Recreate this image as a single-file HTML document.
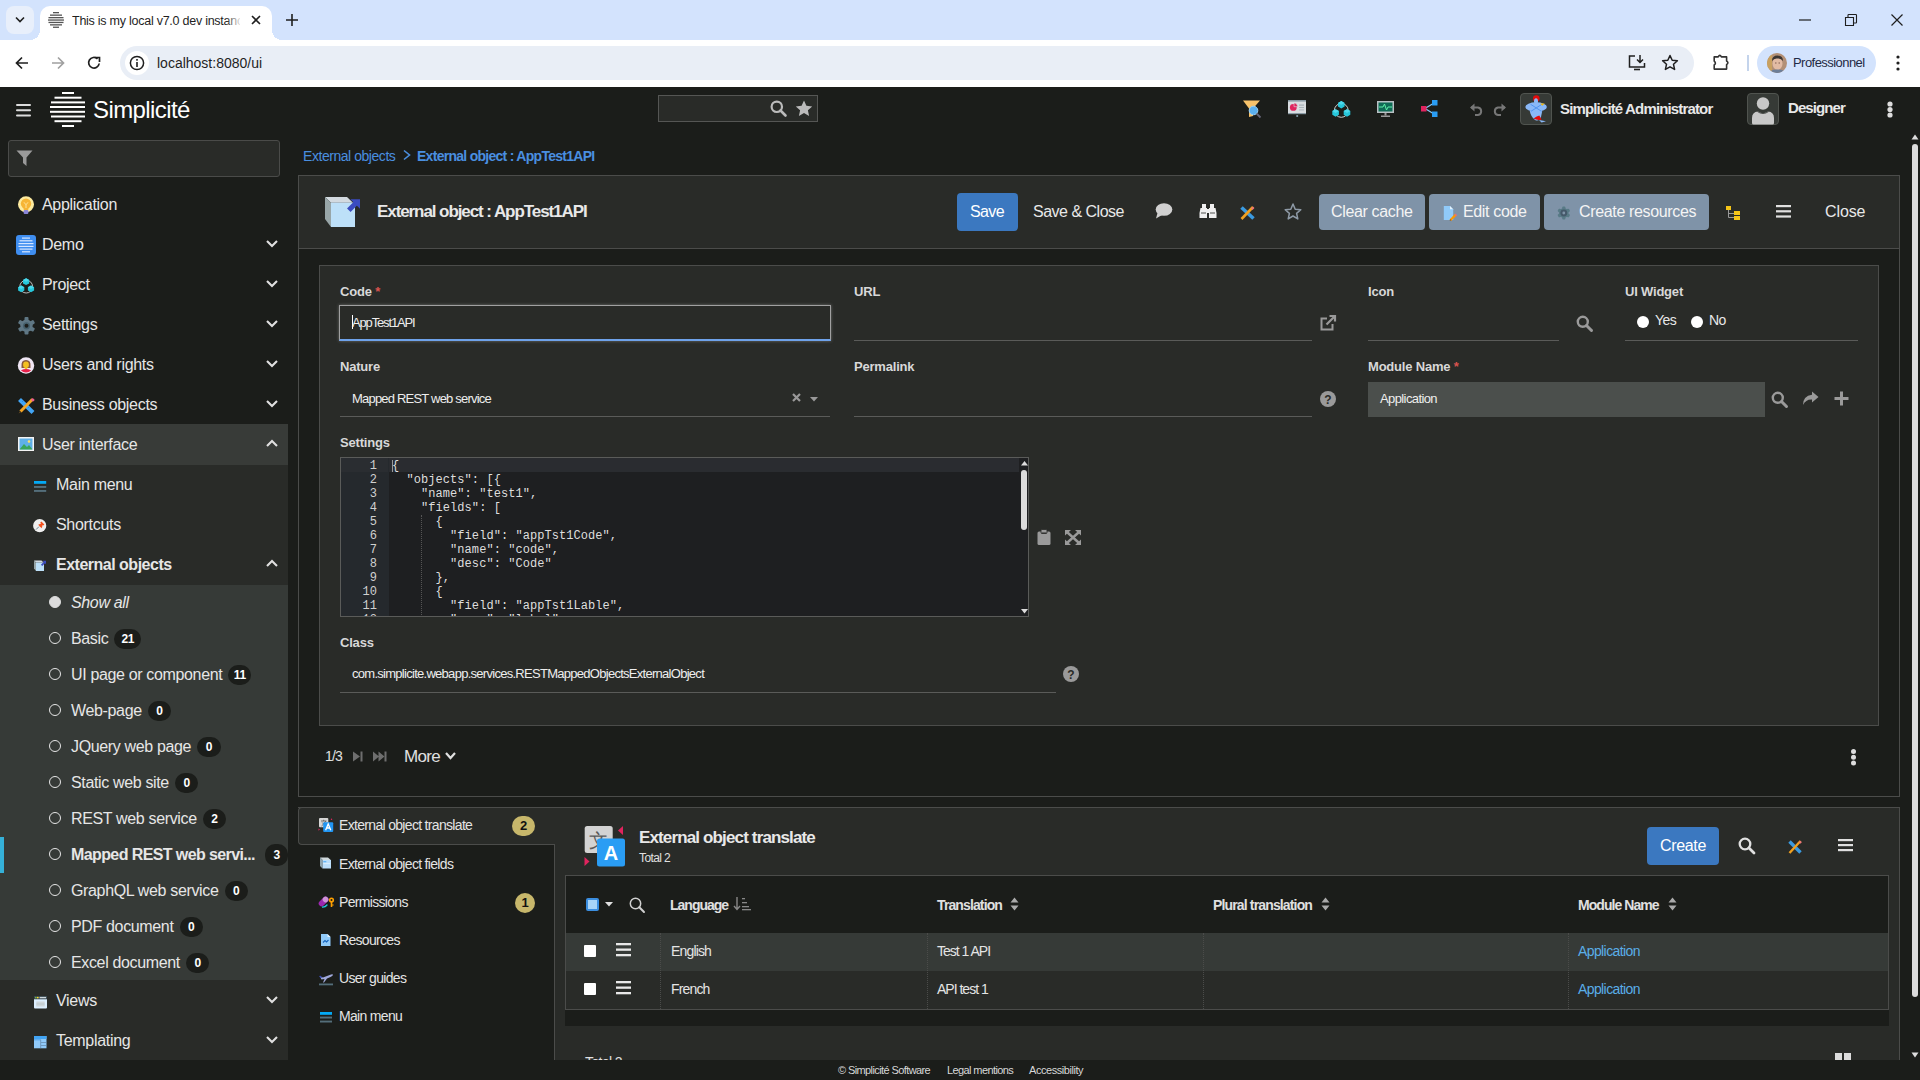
<!DOCTYPE html>
<html><head><meta charset="utf-8">
<style>
*{box-sizing:border-box;margin:0;padding:0}
html,body{width:1920px;height:1080px;overflow:hidden;background:#1b1d1a;font-family:"Liberation Sans",sans-serif;color:#e3e3e3}
.a{position:absolute}
.t{position:absolute;white-space:nowrap;line-height:1}
svg{position:absolute;overflow:visible}
/* chrome */
#tabs{left:0;top:0;width:1920px;height:40px;background:#d3e3fd}
#tool{left:0;top:40px;width:1920px;height:47px;background:#fff}
#omni{left:120px;top:46px;width:1574px;height:34px;border-radius:17px;background:#e9eef6}
/* app */
#hdr{left:0;top:87px;width:1920px;height:43px;background:#1b1d1a}
#side{left:0;top:130px;width:288px;height:930px;background:#1b1d1a}
.mi{position:absolute;left:0;width:288px;height:40px}
.mi .lb{position:absolute;left:42px;top:13px;font-size:16px;color:#e6e6e6;letter-spacing:-0.3px;white-space:nowrap;line-height:16px}
.chev{position:absolute;left:266px;top:16px;width:12px;height:7px}
.sub{position:absolute;left:0;width:288px;height:36px}
.sub .lb{position:absolute;left:71px;top:11px;font-size:16px;color:#e6e6e6;letter-spacing:-0.35px;white-space:nowrap;line-height:16px}
.sub .rad{position:absolute;left:49px;top:12px;width:12px;height:12px;border:1.5px solid #e6e6e6;border-radius:50%}
.badge{display:inline;background:#1b1d1a;color:#fff;font-weight:700;font-size:12px;line-height:16px;padding:3px 8.5px 3px 8.5px;border-radius:10px;margin-left:6px;letter-spacing:-0.3px;position:relative;top:-1px}
#foot{left:0;top:1060px;width:1920px;height:20px;background:#1b1d1a}
.lbl{position:absolute;font-size:13px;font-weight:700;color:#d8d8d8;letter-spacing:-0.2px;white-space:nowrap;line-height:13px}
.uline{position:absolute;height:1px;background:#5a5b59}
.req{color:#d9534f}
</style></head><body>

<!-- ===== Browser chrome ===== -->
<div id="tabs" class="a"></div>
<div class="a" style="left:6px;top:6px;width:28px;height:28px;border-radius:8px;background:#e8effb;z-index:1"></div>
<svg style="left:15px;top:16px;z-index:2" width="10" height="8"><path d="M1 1.5 L5 5.5 L9 1.5" stroke="#1f1f1f" stroke-width="1.6" fill="none"/></svg>
<div class="a" style="left:40px;top:6px;width:232px;height:40px;background:#fff;border-radius:10px 10px 0 0"></div>
<div class="a" style="left:30px;top:30px;width:10px;height:10px;background:radial-gradient(circle at 0 0,#d3e3fd 10px,#fff 10px)"></div>
<div class="a" style="left:272px;top:30px;width:10px;height:10px;background:radial-gradient(circle at 100% 0,#d3e3fd 10px,#fff 10px)"></div>
<svg style="left:48px;top:12px" width="16" height="16"><g fill="#555"><rect x="5" y="0" width="6" height="1.3"/><rect x="2" y="2.5" width="12" height="1.3"/><rect x="0.5" y="5" width="15" height="1.3"/><rect x="0" y="7.4" width="16" height="1.3"/><rect x="0.5" y="9.8" width="15" height="1.3"/><rect x="2" y="12.2" width="12" height="1.3"/><rect x="5" y="14.6" width="6" height="1.3"/></g></svg>
<div class="t" style="left:72px;top:15px;font-size:12.5px;color:#1f1f1f;width:168px;overflow:hidden;letter-spacing:-0.25px">This is my local v7.0 dev instanc</div>
<div class="a" style="left:226px;top:10px;width:16px;height:22px;background:linear-gradient(90deg,rgba(255,255,255,0),#fff)"></div>
<svg style="left:251px;top:15px" width="10" height="10"><path d="M1 1L9 9M9 1L1 9" stroke="#1f1f1f" stroke-width="1.6"/></svg>
<svg style="left:286px;top:14px" width="12" height="12"><path d="M6 0V12M0 6H12" stroke="#1f1f1f" stroke-width="1.6"/></svg>
<svg style="left:1799px;top:19px" width="12" height="2"><path d="M0 1H12" stroke="#1f1f1f" stroke-width="1.2"/></svg>
<svg style="left:1845px;top:14px" width="12" height="12"><path d="M0.5 3.5H8.5V11.5H0.5Z M3 3.5V1.2Q3 0.5 3.7 0.5H10.8Q11.5 0.5 11.5 1.2V8.3Q11.5 9 10.8 9H8.5" stroke="#1f1f1f" stroke-width="1.1" fill="none"/></svg>
<svg style="left:1891px;top:14px" width="12" height="12"><path d="M0.5 0.5L11.5 11.5M11.5 0.5L0.5 11.5" stroke="#1f1f1f" stroke-width="1.2"/></svg>

<div id="tool" class="a"></div>
<svg style="left:15px;top:56px" width="14" height="14"><path d="M13 7H2M7 1.5L1.5 7L7 12.5" stroke="#1f1f1f" stroke-width="1.7" fill="none"/></svg>
<svg style="left:51px;top:56px" width="14" height="14"><path d="M1 7H12M7 1.5L12.5 7L7 12.5" stroke="#a0a0a0" stroke-width="1.7" fill="none"/></svg>
<svg style="left:87px;top:56px" width="14" height="14"><path d="M12.2 7.5A5.3 5.3 0 1 1 10.5 2.8" stroke="#1f1f1f" stroke-width="1.7" fill="none"/><path d="M8 1.5H12.5V6" stroke="#1f1f1f" stroke-width="1.7" fill="none"/></svg>
<div id="omni" class="a"></div>
<div class="a" style="left:125px;top:51px;width:24px;height:24px;border-radius:12px;background:#fff"></div>
<svg style="left:129px;top:55px" width="16" height="16"><circle cx="8" cy="8" r="6.6" stroke="#1f1f1f" stroke-width="1.5" fill="none"/><rect x="7.2" y="7" width="1.6" height="5" fill="#1f1f1f"/><rect x="7.2" y="4" width="1.6" height="1.7" fill="#1f1f1f"/></svg>
<div class="t" style="left:157px;top:56px;font-size:14px;color:#1f1f1f">localhost:8080/ui</div>
<svg style="left:1628px;top:54px" width="18" height="18"><path d="M7 2H1.5V13H16.5V9" stroke="#1f1f1f" stroke-width="1.5" fill="none"/><path d="M12 1V8M9 5.5L12 8.5L15 5.5" stroke="#1f1f1f" stroke-width="1.5" fill="none"/><path d="M6 15.5H12" stroke="#1f1f1f" stroke-width="1.6"/></svg>
<svg style="left:1661px;top:54px" width="18" height="18"><path d="M9 1.5L11.2 6.3L16.4 6.8L12.5 10.3L13.6 15.4L9 12.8L4.4 15.4L5.5 10.3L1.6 6.8L6.8 6.3Z" stroke="#1f1f1f" stroke-width="1.5" fill="none" stroke-linejoin="round"/></svg>
<svg style="left:1712px;top:53px" width="18" height="18"><path d="M2.2 3.9H6.2Q7.8 0.8 9.4 3.9H14.6V8Q17.2 9.8 14.6 11.6V16.1H2.2V12Q4.6 10.2 2.2 8.1Z" stroke="#333" stroke-width="1.6" fill="none" stroke-linejoin="round"/></svg>
<div class="a" style="left:1747px;top:55px;width:1.5px;height:16px;background:#c4d4ec"></div>
<div class="a" style="left:1757px;top:46px;width:119px;height:34px;border-radius:17px;background:#d3e3fd"></div>
<svg style="left:1767px;top:53px" width="20" height="20"><defs><clipPath id="avc"><circle cx="10" cy="10" r="10"/></clipPath></defs><g clip-path="url(#avc)"><rect width="20" height="20" fill="#b39076"/><rect x="0" y="0" width="5" height="20" fill="#c8a060"/><ellipse cx="10.5" cy="10.5" rx="5" ry="6.5" fill="#e2bba4"/><path d="M5 8Q5 2.5 10.5 2.5Q16 2.5 16 8Q14 5 10.5 5.5Q7 5 5 8Z" fill="#3b3532"/><path d="M2 20Q4 16 10.5 16.5Q17 16 19 20Z" fill="#6c7e98"/><path d="M8 10H9.5M11.5 10H13" stroke="#6a4a3a" stroke-width="0.8"/></g></svg>
<div class="t" style="left:1793px;top:56px;font-size:13px;color:#1f2a44;letter-spacing:-0.55px">Professionnel</div>
<svg style="left:1896px;top:55px" width="4" height="16"><circle cx="2" cy="2" r="1.6" fill="#1f1f1f"/><circle cx="2" cy="8" r="1.6" fill="#1f1f1f"/><circle cx="2" cy="14" r="1.6" fill="#1f1f1f"/></svg>

<!-- ===== App header ===== -->
<div id="hdr" class="a"></div>
<svg style="left:16px;top:104px" width="16" height="13"><g fill="#dcdcdc"><rect x="0" y="0" width="15" height="2" rx="1"/><rect x="0" y="5.3" width="15" height="2" rx="1"/><rect x="0" y="10.5" width="15" height="2" rx="1"/></g></svg>
<svg style="left:50px;top:92px" width="36" height="37"><g fill="#fff"><rect x="12" y="0" width="12" height="2"/><rect x="4.5" y="4.7" width="27" height="2"/><rect x="1" y="9.4" width="34" height="2"/><rect x="0" y="14" width="35" height="2"/><rect x="0" y="18.8" width="35" height="2"/><rect x="1" y="23.5" width="34" height="2"/><rect x="4.5" y="28.2" width="27" height="2"/><rect x="12" y="33" width="12" height="2"/></g></svg>
<div class="t" style="left:93px;top:98px;font-size:24px;color:#fff;letter-spacing:-0.6px">Simplicité</div>


<!-- ===== Sidebar ===== -->
<div class="a" style="left:8px;top:140px;width:272px;height:37px;border:1px solid #4a4b49;border-radius:3px;background:#292b28"></div>
<svg style="left:16px;top:150px" width="18" height="17"><path d="M0.5 0.5H16.5L10.5 7.5V16L7 13V7.5Z" fill="#9a9a9a"/></svg>

<div class="mi" style="top:184px"><svg style="left:18px;top:12px" width="17" height="20"><circle cx="8" cy="8.3" r="8" fill="#fdeba0"/><circle cx="8" cy="7.6" r="5.2" fill="#f7b535"/><path d="M5.2 10.5H10.8L10.2 14H5.8Z" fill="#f7b535"/><path d="M6 6.3L8 8.8L10 6.3M8 8.8V12" stroke="#fde7a6" stroke-width="0.9" fill="none"/><rect x="5.6" y="14" width="4.8" height="4" rx="1.2" fill="#8a86d8"/></svg><span class="lb">Application</span></div>
<div class="mi" style="top:224px"><svg style="left:16px;top:11px" width="20" height="20"><rect x="0" y="0" width="20" height="20" rx="3" fill="#3f8ef0"/><g fill="#d6e6ff"><rect x="6" y="2.5" width="8" height="1.2"/><rect x="3.5" y="5.2" width="13" height="1.2"/><rect x="2.5" y="8" width="15" height="1.2"/><rect x="2.5" y="10.8" width="15" height="1.2"/><rect x="3.5" y="13.5" width="13" height="1.2"/><rect x="6" y="16.2" width="8" height="1.2"/></g></svg><span class="lb">Demo</span><svg class="chev" viewBox="0 0 12 7"><path d="M1 1L6 6L11 1" stroke="#e0e0e0" stroke-width="2.1" fill="none"/></svg></div>
<div class="mi" style="top:264px"><svg style="left:18px;top:14px" width="17" height="16"><circle cx="8.2" cy="8.6" r="6.4" stroke="#cfcfcf" stroke-width="0.9" fill="none"/><path d="M8.1 0.3L11.2 2V5.4L8.1 7.1L5 5.4V2Z" fill="#26c6da"/><path d="M3.2 7.5L6.3 9.2V12.6L3.2 14.3L0.1 12.6V9.2Z" fill="#26c6da"/><path d="M13 7.5L16.1 9.2V12.6L13 14.3L9.9 12.6V9.2Z" fill="#26c6da"/><path d="M8.1 0.3L11.2 2L8.1 3.7L5 2Z M3.2 7.5L6.3 9.2L3.2 10.9L0.1 9.2Z M13 7.5L16.1 9.2L13 10.9L9.9 9.2Z" fill="#4dd9ec"/></svg><span class="lb">Project</span><svg class="chev" viewBox="0 0 12 7"><path d="M1 1L6 6L11 1" stroke="#e0e0e0" stroke-width="2.1" fill="none"/></svg></div>
<div class="mi" style="top:304px"><svg style="left:18px;top:13px" width="17" height="18"><g fill="#5f7784"><circle cx="8.5" cy="8.8" r="6.2"/><rect x="6.5" y="0" width="4" height="17.6" rx="1"/><rect x="6.5" y="0" width="4" height="17.6" rx="1" transform="rotate(60 8.5 8.8)"/><rect x="6.5" y="0" width="4" height="17.6" rx="1" transform="rotate(-60 8.5 8.8)"/></g><circle cx="8.5" cy="8.8" r="3.6" fill="#46606c"/><circle cx="8.5" cy="8.8" r="2" fill="#1b1d1a"/></svg><span class="lb">Settings</span><svg class="chev" viewBox="0 0 12 7"><path d="M1 1L6 6L11 1" stroke="#e0e0e0" stroke-width="2.1" fill="none"/></svg></div>
<div class="mi" style="top:344px"><svg style="left:18px;top:13px" width="17" height="17"><circle cx="8" cy="8.5" r="8.2" fill="#efe6f4"/><defs><clipPath id="uc"><circle cx="8" cy="8.5" r="7"/></clipPath></defs><g clip-path="url(#uc)"><path d="M3.5 9Q3 3 8 3Q13 3 12.5 9V11H3.5Z" fill="#8a5a3a"/><ellipse cx="8" cy="7.8" rx="2.9" ry="3.3" fill="#f4c020"/><rect x="6.8" y="10.5" width="2.4" height="2" fill="#f4c020"/><path d="M1.5 17Q2 12 8 12Q14 12 14.5 17Z" fill="#e8204a"/></g></svg><span class="lb">Users and rights</span><svg class="chev" viewBox="0 0 12 7"><path d="M1 1L6 6L11 1" stroke="#e0e0e0" stroke-width="2.1" fill="none"/></svg></div>
<div class="mi" style="top:384px"><svg style="left:18px;top:14px" width="17" height="16"><path d="M1.5 1.5L15 14.5" stroke="#42a5f5" stroke-width="4.2"/><path d="M4 4L5 3M7 7L8 6M10 10L11 9" stroke="#1e88e5" stroke-width="0.8"/><path d="M14.5 1.3L2.5 13.5" stroke="#f5a623" stroke-width="3"/><path d="M13.8 0.8L15.8 2.8" stroke="#f06292" stroke-width="2.6"/><path d="M2.2 12.8L0.6 15.4L3.2 14Z" fill="#6d4c1f"/></svg><span class="lb">Business objects</span><svg class="chev" viewBox="0 0 12 7"><path d="M1 1L6 6L11 1" stroke="#e0e0e0" stroke-width="2.1" fill="none"/></svg></div>
<div class="mi" style="top:424px;background:#383b38;height:41px"><svg style="left:18px;top:13px" width="16" height="14"><rect x="0" y="0" width="16" height="14" fill="#f4f4f4"/><rect x="1.5" y="1.5" width="13" height="11" fill="#5fb0e8"/><path d="M1.5 12.5L6 7L9 10L11 8L14.5 12.5Z" fill="#3aa55a"/><circle cx="11" cy="4.5" r="1.3" fill="#ffe066"/></svg><span class="lb">User interface</span><svg class="chev" viewBox="0 0 12 7"><path d="M1 6L6 1L11 6" stroke="#e0e0e0" stroke-width="2.1" fill="none"/></svg></div>
<div class="mi" style="top:465px;height:120px;background:#292b28"></div>
<div class="mi" style="top:464px"><svg style="left:34px;top:17px" width="13" height="12"><rect x="0" y="0" width="12.2" height="2.8" fill="#03a9f4"/><rect x="0" y="5" width="12.2" height="1.9" fill="#546e7a"/><rect x="0" y="9" width="12.2" height="1.9" fill="#546e7a"/></svg><span class="lb" style="left:56px">Main menu</span></div>
<div class="mi" style="top:504px"><svg style="left:33px;top:15px" width="14" height="14"><circle cx="6.7" cy="6.7" r="6.6" fill="#efefef"/><path d="M3 10.6L6 7.6" stroke="#607d8b" stroke-width="0.9"/><path d="M5.2 5.8L8.6 9.2L9.4 7.4L7 5Z" fill="#f4511e"/><path d="M7.2 3.6L10.2 6.6L11.4 5.4L8.4 2.4Z" fill="#f4511e"/><rect x="7" y="4" width="2.6" height="3.6" transform="rotate(45 8.3 5.8)" fill="#f4511e"/></svg><span class="lb" style="left:56px">Shortcuts</span></div>
<div class="mi" style="top:544px"><svg style="left:34px;top:16px" width="13" height="12"><polygon points="0,0.5 7.5,0.5 9.5,2.5 2,2.5" fill="#d3dae0"/><polygon points="0,0.5 2,2.5 2,11 0,8.5" fill="#98a6a8"/><rect x="2" y="2.5" width="8" height="8.5" fill="#bde0f8"/><path d="M7.6 5.4L10.6 2.4" stroke="#3b4cc0" stroke-width="1.8"/><polygon points="8.6,0.8 12,0.8 12,4.2" fill="#3b4cc0"/></svg><span class="lb" style="left:56px;font-weight:700;letter-spacing:-0.5px">External objects</span><svg class="chev" viewBox="0 0 12 7"><path d="M1 6L6 1L11 6" stroke="#e0e0e0" stroke-width="2.1" fill="none"/></svg></div>
<div class="mi" style="top:585px;height:395px;background:#363a37"></div>
<div class="sub" style="top:584px"><div class="rad" style="background:#dcdcdc;border-color:#dcdcdc"></div><span class="lb" style="font-style:italic">Show all</span></div>
<div class="sub" style="top:620px"><div class="rad"></div><span class="lb">Basic<span class="badge" style="padding:3px 7px">21</span></span></div>
<div class="sub" style="top:656px"><div class="rad"></div><span class="lb">UI page or component<span class="badge" style="padding:3px 5.5px">11</span></span></div>
<div class="sub" style="top:692px"><div class="rad"></div><span class="lb">Web-page<span class="badge">0</span></span></div>
<div class="sub" style="top:728px"><div class="rad"></div><span class="lb">JQuery web page<span class="badge">0</span></span></div>
<div class="sub" style="top:764px"><div class="rad"></div><span class="lb">Static web site<span class="badge">0</span></span></div>
<div class="sub" style="top:800px"><div class="rad"></div><span class="lb">REST web service<span class="badge">2</span></span></div>
<div class="a" style="left:0;top:837px;width:4px;height:36px;background:#35b0d8"></div>
<div class="sub" style="top:836px"><div class="rad"></div><span class="lb" style="font-weight:700;letter-spacing:-0.6px">Mapped REST web servi...</span><span class="badge" style="position:absolute;left:259px;top:8px">3</span></div>
<div class="sub" style="top:872px"><div class="rad"></div><span class="lb">GraphQL web service<span class="badge">0</span></span></div>
<div class="sub" style="top:908px"><div class="rad"></div><span class="lb">PDF document<span class="badge">0</span></span></div>
<div class="sub" style="top:944px"><div class="rad"></div><span class="lb">Excel document<span class="badge">0</span></span></div>
<div class="mi" style="top:980px;height:80px;background:#292b28"></div>
<div class="mi" style="top:980px"><svg style="left:34px;top:16px" width="13" height="13"><rect x="0" y="0" width="13" height="12.5" rx="1" fill="#dcefff"/><rect x="0" y="0" width="13" height="3.3" fill="#37474f"/><circle cx="1.8" cy="1.6" r="0.9" fill="#7cb342"/><circle cx="3.8" cy="1.6" r="0.9" fill="#fdd835"/><rect x="5.6" y="0.9" width="6.5" height="1.4" fill="#cfd8dc"/><rect x="2.3" y="5.5" width="8.4" height="5" fill="#cfd8dc"/><rect x="2.3" y="7.7" width="8.4" height="0.6" fill="#b0bec5"/></svg><span class="lb" style="left:56px">Views</span><svg class="chev" viewBox="0 0 12 7"><path d="M1 1L6 6L11 1" stroke="#e0e0e0" stroke-width="2.1" fill="none"/></svg></div>
<div class="mi" style="top:1020px"><svg style="left:34px;top:16px" width="13" height="13"><rect x="0" y="0" width="12.5" height="12.3" fill="#90caf9"/><rect x="0" y="0" width="12.5" height="3" fill="#42a5f5"/><rect x="0" y="3.6" width="6.5" height="0.6" fill="#1e88e5"/><rect x="6.5" y="3.6" width="0.6" height="8.7" fill="#5c7a99"/><rect x="7.1" y="6.3" width="5.4" height="0.6" fill="#5c7a99"/><rect x="7.1" y="9" width="5.4" height="0.6" fill="#5c7a99"/></svg><span class="lb" style="left:56px">Templating</span><svg class="chev" viewBox="0 0 12 7"><path d="M1 1L6 6L11 1" stroke="#e0e0e0" stroke-width="2.1" fill="none"/></svg></div>


<!-- ===== Header right ===== -->
<div class="a" style="left:658px;top:95px;width:160px;height:27px;border:1px solid #555654;background:#292b28"></div>
<svg style="left:770px;top:100px" width="17" height="17"><circle cx="6.8" cy="6.8" r="5.2" stroke="#bbb" stroke-width="2.2" fill="none"/><path d="M10.5 10.5L15.5 15.5" stroke="#bbb" stroke-width="2.6" stroke-linecap="round"/></svg>
<svg style="left:795px;top:100px" width="18" height="17"><path d="M9 0.5L11.4 5.8L17.2 6.4L12.9 10.3L14.1 16L9 13.1L3.9 16L5.1 10.3L0.8 6.4L6.6 5.8Z" fill="#bbb"/></svg>

<svg style="left:1243px;top:100px" width="19" height="18"><path d="M0 0.5H17L10 8.5V16L6 17V8.5Z" fill="#f6c26b"/><circle cx="10.5" cy="10.5" r="4.3" fill="#5bb0ee" stroke="#9ad0f6" stroke-width="1"/><path d="M13.5 13.5L17.5 17.5" stroke="#667" stroke-width="1.8"/></svg>
<svg style="left:1288px;top:100px" width="19" height="18"><rect x="0" y="0" width="18" height="14" fill="#d9dde0"/><rect x="0" y="0" width="18" height="1.6" fill="#8a9aa4"/><rect x="0" y="13" width="18" height="1.2" fill="#8a9aa4"/><circle cx="5.3" cy="7.4" r="3.4" fill="#e0245e"/><path d="M6 6.7V3A3.5 3.5 0 0 1 9.6 6.7Z" fill="#e0245e" stroke="#d9dde0" stroke-width="0.6"/><g fill="#a8b2b8"><rect x="11" y="4.5" width="5" height="1.2"/><rect x="11" y="7" width="5" height="0.9"/><rect x="11" y="9.5" width="5" height="0.9"/></g><rect x="8.3" y="15" width="1.8" height="2" fill="#78909c"/></svg>
<svg style="left:1332px;top:101px" width="19" height="17"><circle cx="9.3" cy="9.4" r="6.9" stroke="#d0d0d0" stroke-width="1" fill="none"/><path d="M9.3 0L12.6 1.9V5.6L9.3 7.5L6 5.6V1.9Z" fill="#26c6da"/><path d="M3.6 8.2L6.9 10.1V13.8L3.6 15.7L0.3 13.8V10.1Z" fill="#26c6da"/><path d="M15 8.2L18.3 10.1V13.8L15 15.7L11.7 13.8V10.1Z" fill="#26c6da"/><path d="M9.3 0L12.6 1.9L9.3 3.8L6 1.9Z M3.6 8.2L6.9 10.1L3.6 12L0.3 10.1Z M15 8.2L18.3 10.1L15 12L11.7 10.1Z" fill="#4dd9ec"/></svg>
<svg style="left:1377px;top:101px" width="18" height="18"><rect x="0" y="0" width="17" height="12" fill="#b8c0c4"/><rect x="1.5" y="1.5" width="14" height="9" fill="#0f6a55"/><path d="M2 6H6L7.5 3L9.5 9L11 6H15" stroke="#5ff0a8" stroke-width="1" fill="none"/><rect x="7.5" y="12" width="2" height="2.5" fill="#999"/><rect x="4" y="14.5" width="9" height="1.5" fill="#999"/></svg>
<svg style="left:1421px;top:100px" width="17" height="18"><path d="M4 8.5L13 3M4 8.5L13 14" stroke="#8ac8f8" stroke-width="1.3"/><rect x="0" y="6" width="5.5" height="5.5" fill="#e0245e"/><rect x="11" y="0" width="5.5" height="5.5" fill="#2a9df4"/><rect x="11" y="11.5" width="5.5" height="5.5" fill="#2a9df4"/></svg>
<svg style="left:1470px;top:103px" width="13" height="12"><path d="M1 4.5H8A3.8 3.8 0 0 1 8 12H5" stroke="#777" stroke-width="2" fill="none"/><path d="M0 4.5L4.5 0.5V8.5Z" fill="#777"/></svg>
<svg style="left:1493px;top:103px" width="13" height="12"><path d="M12 4.5H5A3.8 3.8 0 0 0 5 12H8" stroke="#777" stroke-width="2" fill="none"/><path d="M13 4.5L8.5 0.5V8.5Z" fill="#777"/></svg>
<div class="a" style="left:1520px;top:93px;width:32px;height:32px;border-radius:4px;background:#363a36;border:1px solid #50544f"></div>
<svg style="left:1520px;top:93px" width="32" height="32"><circle cx="16.3" cy="5.6" r="3.3" fill="#e30b0b"/><path d="M9.6 17.5H22.3L21 24Q19 29 15 27Q11 24 9.6 17.5Z" fill="#8ab8f8"/><ellipse cx="16.1" cy="13.9" rx="10.8" ry="4.6" fill="#8ab8f8"/><ellipse cx="16" cy="8.2" rx="2" ry="2.9" fill="#8ab8f8"/><path d="M10.5 11.2L21.5 18.3M22 11.2L11 18.3" stroke="#4a90f0" stroke-width="0.9"/><path d="M20.3 10.6L24.8 10.4L22.2 12.7Z" fill="#f5b800"/><path d="M13.5 25.6Q17 23 19.3 22.5L21.5 26.5Q18 28 13.5 25.6Z" fill="#e30b0b"/><path d="M19 27L26 28.2L21.5 29.5Z" fill="#8ab8f8"/></svg>
<div class="t" style="left:1560px;top:101px;font-size:15px;font-weight:700;color:#e8e8e8;letter-spacing:-0.85px">Simplicité Administrator</div>
<div class="a" style="left:1747px;top:93px;width:32px;height:32px;border-radius:4px;background:#363a36;border:1px solid #50544f"></div>
<svg style="left:1747px;top:93px" width="32" height="32"><circle cx="16" cy="10.5" r="6.2" fill="#c8c8c8"/><path d="M5 30V25Q5 19 11 18.5Q16 22 21 18.5Q27 19 27 25V30Q27 31.5 25.5 31.5H6.5Q5 31.5 5 30Z" fill="#c8c8c8"/><path d="M10.5 18.6Q16 22.5 21.5 18.6" stroke="#363a36" stroke-width="0.8" fill="none"/></svg>
<div class="t" style="left:1788px;top:100px;font-size:15px;font-weight:700;color:#e8e8e8;letter-spacing:-0.9px">Designer</div>
<svg style="left:1886px;top:101px" width="8" height="17"><circle cx="4" cy="3" r="2.6" fill="#ddd"/><circle cx="4" cy="8.5" r="2.6" fill="#ddd"/><circle cx="4" cy="14" r="2.6" fill="#ddd"/></svg>

<!-- page scrollbar -->
<svg style="left:1911px;top:134px" width="8" height="6"><path d="M0.5 5.5L4 0.5L7.5 5.5Z" fill="#ddd"/></svg>
<div class="a" style="left:1912px;top:144px;width:6px;height:853px;border-radius:3px;background:#dcdcdc"></div>
<svg style="left:1911px;top:1052px" width="8" height="6"><path d="M0.5 0.5L4 5.5L7.5 0.5Z" fill="#ddd"/></svg>

<!-- ===== Breadcrumb ===== -->
<div class="t" style="left:303px;top:149px;font-size:14px;color:#4a8fe0;letter-spacing:-0.45px">External objects</div>
<svg style="left:403px;top:150px" width="8" height="10"><path d="M1 0.5L6.5 5L1 9.5" stroke="#4a8fe0" stroke-width="1.6" fill="none"/></svg>
<div class="t" style="left:417px;top:149px;font-size:14px;font-weight:700;color:#4a8fe0;letter-spacing:-0.72px">External object : AppTest1API</div>

<!-- ===== Main panel ===== -->
<div class="a" style="left:298px;top:175px;width:1602px;height:622px;border:1px solid #4b4c4a;background:#1b1d1a"></div>
<div class="a" style="left:299px;top:176px;width:1600px;height:73px;background:#292b28;border-bottom:1px solid #4b4c4a"></div>
<svg style="left:320px;top:190px" width="42" height="40"><polygon points="5,7 27,7 33,12.7 11,12.7" fill="#d3dae0"/><polygon points="5,7 11,12.7 11,37 5,29" fill="#98a6a8"/><rect x="11" y="12.7" width="24" height="24.3" fill="#bde0f8"/><path d="M28.8 20.2L36.5 12.5" stroke="#3b4cc0" stroke-width="5"/><polygon points="30.4,9.2 40,9.2 40,18.8" fill="#3b4cc0"/></svg>
<div class="t" style="left:377px;top:203px;font-size:17px;font-weight:700;color:#e8e8e8;letter-spacing:-1.08px">External object : AppTest1API</div>

<div class="a" style="left:957px;top:193px;width:61px;height:38px;border-radius:4px;background:#3b78c0"></div>
<div class="t" style="left:970px;top:204px;font-size:16px;color:#fff;letter-spacing:-0.6px">Save</div>
<div class="t" style="left:1033px;top:204px;font-size:16px;color:#e8e8e8;letter-spacing:-0.5px">Save &amp; Close</div>
<svg style="left:1155px;top:203px" width="18" height="16"><ellipse cx="9" cy="6.5" rx="8.3" ry="6.3" fill="#d0d0d0"/><path d="M2.5 10L1 15.5L7 12Z" fill="#d0d0d0"/></svg>
<svg style="left:1199px;top:204px" width="18" height="15"><path d="M3 0H7V4H3Z M11 0H15V4H11Z" fill="#f0f0f0"/><path d="M1.5 4H8V14H0.5V9Z M10 4H16.5L17.5 9V14H10Z" fill="#f0f0f0"/><rect x="7" y="5" width="4" height="4" fill="#f0f0f0"/><path d="M2 9H7M11 9H16" stroke="#292b28" stroke-width="0.8"/></svg>
<svg style="left:1240px;top:206px" width="15" height="14"><path d="M1.5 1.5L13.5 12.5" stroke="#3a9ae0" stroke-width="3.6"/><path d="M13 1L1.5 13" stroke="#f0a020" stroke-width="2.6"/><path d="M12 1.5L13.5 3" stroke="#e77" stroke-width="2.6"/></svg>
<svg style="left:1284px;top:203px" width="18" height="17"><path d="M9 1L11.2 6.2L16.8 6.7L12.6 10.4L13.8 15.9L9 13L4.2 15.9L5.4 10.4L1.2 6.7L6.8 6.2Z" stroke="#8e9aa6" stroke-width="1.5" fill="none" stroke-linejoin="round"/></svg>

<div class="a" style="left:1319px;top:194px;width:106px;height:36px;border-radius:4px;background:#7f93a8"></div>
<div class="t" style="left:1331px;top:204px;font-size:16px;color:#f4f4f4;letter-spacing:-0.35px">Clear cache</div>
<div class="a" style="left:1429px;top:194px;width:111px;height:36px;border-radius:4px;background:#7f93a8"></div>
<svg style="left:1443px;top:205px" width="15" height="17"><path d="M0.8 1H7L10.2 4.2V15H0.8Z" fill="#90caf9"/><path d="M7 1V4.2H10.2Z" fill="#e3f2fd"/><path d="M7.3 15.2L12.6 9.9" stroke="#ff9800" stroke-width="2.2"/><path d="M12 9.2L13.6 10.8" stroke="#e57373" stroke-width="1.8"/><path d="M6.5 16L7.6 14.2L8.4 15Z" fill="#6d4c1f"/></svg>
<div class="t" style="left:1463px;top:204px;font-size:16px;color:#f4f4f4;letter-spacing:-0.35px">Edit code</div>
<div class="a" style="left:1544px;top:194px;width:165px;height:36px;border-radius:4px;background:#7f93a8"></div>
<svg style="left:1557px;top:206px" width="14" height="14"><g fill="#587a86"><circle cx="6.8" cy="7" r="4.8"/><rect x="5.2" y="0.5" width="3.2" height="13" rx="1"/><rect x="5.2" y="0.5" width="3.2" height="13" rx="1" transform="rotate(60 6.8 7)"/><rect x="5.2" y="0.5" width="3.2" height="13" rx="1" transform="rotate(-60 6.8 7)"/></g><circle cx="6.8" cy="7" r="3.4" fill="#45596a"/><circle cx="6.8" cy="7" r="1.4" fill="#8094a8"/></svg>
<div class="t" style="left:1579px;top:204px;font-size:16px;color:#f4f4f4;letter-spacing:-0.35px">Create resources</div>
<svg style="left:1726px;top:206px" width="15" height="14"><path d="M2.5 3V11.5H9M2.5 7.5H9" stroke="#999" stroke-width="1" fill="none"/><rect x="0" y="0" width="5" height="4" fill="#f5c518"/><rect x="8" y="5" width="6" height="4" fill="#f5c518"/><rect x="8" y="10" width="6" height="4" fill="#f5c518"/></svg>
<svg style="left:1776px;top:205px" width="15" height="13"><g fill="#e0e0e0"><rect x="0" y="0" width="15" height="2.2"/><rect x="0" y="5.2" width="15" height="2.2"/><rect x="0" y="10.4" width="15" height="2.2"/></g></svg>
<div class="t" style="left:1825px;top:204px;font-size:16px;color:#e8e8e8;letter-spacing:-0.1px">Close</div>

<!-- inner card -->
<div class="a" style="left:319px;top:265px;width:1560px;height:461px;border:1px solid #4b4c4a;background:#292b28"></div>

<div class="lbl" style="left:340px;top:285px">Code <span class="req">*</span></div>
<div class="a" style="left:339px;top:305px;width:492px;height:36px;border:1px solid #a0a0a0;border-bottom:2px solid #6ea2ea;box-shadow:0 0 3px rgba(160,160,160,0.6);background:#292b28"></div>
<div class="a" style="left:352px;top:315px;width:1px;height:14px;background:#fff"></div>
<div class="t" style="left:352px;top:316px;font-size:13px;color:#eee;letter-spacing:-1.15px">AppTest1API</div>

<div class="lbl" style="left:854px;top:285px">URL</div>
<div class="uline" style="left:854px;top:340px;width:458px"></div>
<svg style="left:1320px;top:315px" width="16" height="16"><path d="M12.5 9V14.5H1.5V3.5H7" stroke="#9a9a9a" stroke-width="2" fill="none"/><path d="M6.5 9.5L14 2M9.5 1H15V6.5" stroke="#9a9a9a" stroke-width="2.2" fill="none"/></svg>

<div class="lbl" style="left:1368px;top:285px">Icon</div>
<div class="uline" style="left:1368px;top:340px;width:191px"></div>
<svg style="left:1576px;top:315px" width="17" height="17"><circle cx="6.8" cy="6.8" r="5" stroke="#9a9a9a" stroke-width="2.4" fill="none"/><path d="M10.5 10.5L15.5 15.5" stroke="#9a9a9a" stroke-width="3" stroke-linecap="round"/></svg>

<div class="lbl" style="left:1625px;top:285px">UI Widget</div>
<div class="a" style="left:1637px;top:316px;width:12px;height:12px;border-radius:6px;background:#fff"></div>
<div class="t" style="left:1655px;top:313px;font-size:14px;color:#e8e8e8;letter-spacing:-0.6px">Yes</div>
<div class="a" style="left:1691px;top:316px;width:12px;height:12px;border-radius:6px;background:#fff"></div>
<div class="t" style="left:1709px;top:313px;font-size:14px;color:#e8e8e8;letter-spacing:-0.6px">No</div>
<div class="uline" style="left:1625px;top:340px;width:233px"></div>

<div class="lbl" style="left:340px;top:360px">Nature</div>
<div class="t" style="left:352px;top:392px;font-size:13px;color:#eee;letter-spacing:-0.8px">Mapped REST web service</div>
<svg style="left:792px;top:393px" width="9" height="9"><path d="M1 1L8 8M8 1L1 8" stroke="#999" stroke-width="2.2"/></svg>
<svg style="left:810px;top:397px" width="8" height="5"><path d="M0 0H8L4 4.5Z" fill="#999"/></svg>
<div class="uline" style="left:340px;top:416px;width:490px"></div>

<div class="lbl" style="left:854px;top:360px">Permalink</div>
<div class="uline" style="left:854px;top:416px;width:458px"></div>
<svg style="left:1320px;top:391px" width="16" height="16"><circle cx="8" cy="8" r="8" fill="#9a9a9a"/><text x="8" y="12.5" font-family="Liberation Sans" font-weight="700" font-size="12" fill="#292b28" text-anchor="middle">?</text></svg>

<div class="lbl" style="left:1368px;top:360px">Module Name <span class="req">*</span></div>
<div class="a" style="left:1368px;top:382px;width:397px;height:35px;background:#4b4f4c"></div>
<div class="t" style="left:1380px;top:392px;font-size:13px;color:#eee;letter-spacing:-0.6px">Application</div>
<svg style="left:1771px;top:391px" width="17" height="17"><circle cx="6.8" cy="6.8" r="5" stroke="#9a9a9a" stroke-width="2.4" fill="none"/><path d="M10.5 10.5L15.5 15.5" stroke="#9a9a9a" stroke-width="3" stroke-linecap="round"/></svg>
<svg style="left:1802px;top:391px" width="17" height="15"><path d="M10 0.5L16.5 6L10 11.5V8.5Q4 8 1 14Q1 5 10 3.8Z" fill="#9a9a9a"/></svg>
<svg style="left:1834px;top:391px" width="15" height="15"><path d="M7.5 0.5V14.5M0.5 7.5H14.5" stroke="#9a9a9a" stroke-width="3"/></svg>

<div class="lbl" style="left:340px;top:436px">Settings</div>

<div class="lbl" style="left:340px;top:636px">Class</div>
<div class="t" style="left:352px;top:667px;font-size:13px;color:#eee;letter-spacing:-0.72px">com.simplicite.webapp.services.RESTMappedObjectsExternalObject</div>
<div class="uline" style="left:340px;top:692px;width:716px"></div>
<svg style="left:1063px;top:666px" width="16" height="16"><circle cx="8" cy="8" r="8" fill="#9a9a9a"/><text x="8" y="12.5" font-family="Liberation Sans" font-weight="700" font-size="12" fill="#292b28" text-anchor="middle">?</text></svg>


<!-- ===== Code editor ===== -->
<div class="a" style="left:340px;top:457px;width:689px;height:160px;border:1px solid #5a5b59;background:#1e1f21;overflow:hidden">
  <div class="a" style="left:0;top:0;width:48px;height:158px;background:#25292d"></div>
  <div class="a" style="left:48px;top:0;width:630px;height:14px;background:#2a2c30"></div>
  <div class="a" style="left:0;top:0;width:47px;height:14px;background:#2a2d31"></div>
  <div class="a" style="left:0;top:1px;width:36px;text-align:right;font-family:'Liberation Mono',monospace;font-size:12px;line-height:14px;color:#d0d0d0"><div>1</div><div>2</div><div>3</div><div>4</div><div>5</div><div>6</div><div>7</div><div>8</div><div>9</div><div>10</div><div>11</div><div>12</div></div>
  <div class="a" style="left:51px;top:1px;font-family:'Liberation Mono',monospace;font-size:12px;line-height:14px;color:#dedede;white-space:pre;letter-spacing:0.06px"><div>{</div><div>  &quot;objects&quot;: [{</div><div>    &quot;name&quot;: &quot;test1&quot;,</div><div>    &quot;fields&quot;: [</div><div>      {</div><div>        &quot;field&quot;: &quot;appTst1Code&quot;,</div><div>        &quot;name&quot;: &quot;code&quot;,</div><div>        &quot;desc&quot;: &quot;Code&quot;</div><div>      },</div><div>      {</div><div>        &quot;field&quot;: &quot;appTst1Lable&quot;,</div><div>        &quot;name&quot;: &quot;label&quot;,</div></div>
  <div class="a" style="left:80px;top:57px;width:0;height:110px;border-left:1px dotted #555"></div>
  <div class="a" style="left:51px;top:2px;width:1px;height:12px;background:#999"></div>
  <div class="a" style="left:678px;top:0;width:10px;height:158px;background:#1e1f21"></div>
  <svg style="left:680px;top:3px" width="7" height="5"><path d="M0 4.5L3.5 0L7 4.5Z" fill="#ddd"/></svg>
  <div class="a" style="left:680px;top:12px;width:6px;height:60px;border-radius:3px;background:#dcdcdc"></div>
  <svg style="left:680px;top:151px" width="7" height="5"><path d="M0 0L3.5 4.5L7 0Z" fill="#ddd"/></svg>
</div>
<svg style="left:1037px;top:529px" width="14" height="16"><rect x="0.5" y="2.5" width="13" height="13.5" rx="1.5" fill="#9a9a9a"/><rect x="4" y="0.5" width="6" height="4" rx="1" fill="#9a9a9a" stroke="#292b28" stroke-width="0.8"/><rect x="4.5" y="3.5" width="5" height="1" fill="#292b28"/></svg>
<svg style="left:1065px;top:530px" width="16" height="15"><path d="M2.5 2.5L13.5 12.5M13.5 2.5L2.5 12.5" stroke="#9a9a9a" stroke-width="2.4"/><path d="M0 0H6L0 5.5Z M16 0H10L16 5.5Z M0 15H6L0 9.5Z M16 15H10L16 9.5Z" fill="#9a9a9a"/></svg>

<!-- footer of panel -->
<div class="t" style="left:325px;top:749px;font-size:14px;color:#e0e0e0;letter-spacing:-0.9px">1/3</div>
<svg style="left:353px;top:751px" width="10" height="11"><path d="M0 0.5L7 5.5L0 10.5Z" fill="#6e6e6e"/><rect x="7.5" y="0.5" width="2" height="10" fill="#6e6e6e"/></svg>
<svg style="left:373px;top:751px" width="14" height="11"><path d="M0 0.5L6 5.5L0 10.5Z M5.5 0.5L11.5 5.5L5.5 10.5Z" fill="#6e6e6e"/><rect x="11.5" y="0.5" width="2" height="10" fill="#6e6e6e"/></svg>
<div class="t" style="left:404px;top:748px;font-size:17px;color:#e0e0e0;letter-spacing:-0.7px">More</div>
<svg style="left:445px;top:752px" width="11" height="8"><path d="M1 1L5.5 6L10 1" stroke="#e0e0e0" stroke-width="2.2" fill="none"/></svg>
<svg style="left:1850px;top:749px" width="7" height="17"><circle cx="3.5" cy="2.6" r="2.5" fill="#ddd"/><circle cx="3.5" cy="8.3" r="2.5" fill="#ddd"/><circle cx="3.5" cy="14" r="2.5" fill="#ddd"/></svg>


<!-- ===== Bottom panel ===== -->
<div class="a" style="left:298px;top:807px;width:1602px;height:253px;border-top:1px solid #4b4c4a;border-right:1px solid #4b4c4a;background:#292b28"></div>
<div class="a" style="left:298px;top:808px;width:257px;height:252px;background:#1b1d1a;border-right:1px solid #4b4c4a"></div>
<div class="a" style="left:298px;top:807px;width:257px;height:38px;background:#292b28;border:1px solid #4b4c4a;border-right:none;border-radius:4px 0 0 4px"></div>
<svg style="left:318px;top:818px" width="16" height="15"><rect x="1" y="0" width="9.3" height="9.3" rx="1" fill="#d6d6d6"/><path d="M3 3H8.5M5.7 1.8V3M3.5 8Q6 6 7.8 3M4.2 4.5Q6 7 8.5 8" stroke="#555" stroke-width="0.8" fill="none"/><rect x="5.2" y="4.2" width="10" height="9.8" rx="1" fill="#2196f3"/><path d="M7.6 12.2L10.2 6L12.8 12.2M8.6 10H11.8" stroke="#fff" stroke-width="1.3" fill="none"/><path d="M13.5 0L14.3 2L12.7 2Z" fill="#e0245e"/><path d="M0.5 10.5L0.5 12.7L2 11.6Z" fill="#e0245e"/></svg>
<div class="t" style="left:339px;top:818px;font-size:14px;color:#e4e4e4;letter-spacing:-0.68px">External object translate</div>
<div class="a" style="left:512px;top:816px;width:23px;height:20px;border-radius:10px;background:#c7b76b;color:#111;font-weight:700;font-size:13px;line-height:20px;text-align:center">2</div>
<svg style="left:320px;top:857px" width="12" height="12"><polygon points="0,0.5 8,0.5 10.8,3 2.5,3" fill="#cfd8dc"/><polygon points="0,0.5 2.5,3 2.5,11.5 0,9" fill="#90a4ae"/><rect x="2.5" y="3" width="8.5" height="8.5" fill="#bbdefb"/><rect x="3.3" y="4" width="3" height="1.3" fill="#64b5f6"/><rect x="3.3" y="6.3" width="7" height="0.8" fill="#e3f2fd"/></svg>
<div class="t" style="left:339px;top:857px;font-size:14px;color:#e4e4e4;letter-spacing:-0.68px">External object fields</div>
<svg style="left:318px;top:895px" width="17" height="13"><path d="M1.5 6.5L5.5 2.5A2.9 2.9 0 0 1 9.6 6.6L5.6 10.6A2.9 2.9 0 0 1 1.5 6.5Z" fill="#9c27b0"/><path d="M5.5 2.5A2.9 2.9 0 0 1 9.6 6.6A2.9 2.9 0 0 1 5.5 2.5Z" fill="#ce93d8"/><path d="M4 12Q7 12.5 9 10" stroke="#26c6da" stroke-width="1.4" fill="none"/><path d="M8.2 9.5L9.6 9.3L9.2 10.8Z" fill="#26c6da"/><circle cx="13.5" cy="5" r="2.6" fill="#ffa000"/><circle cx="13.5" cy="5" r="1" fill="#1b1d1a"/><rect x="12.7" y="6.5" width="1.6" height="5.5" fill="#ffa000"/><rect x="14" y="9.5" width="1.6" height="1" fill="#ffa000"/></svg>
<div class="t" style="left:339px;top:895px;font-size:14px;color:#e4e4e4;letter-spacing:-0.68px">Permissions</div>
<div class="a" style="left:515px;top:893px;width:20px;height:20px;border-radius:10px;background:#c7b76b;color:#111;font-weight:700;font-size:13px;line-height:20px;text-align:center">1</div>
<svg style="left:321px;top:934px" width="10" height="12"><path d="M0 0H6.5L9.5 3V12H0Z" fill="#90caf9"/><path d="M6.5 0V3H9.5Z" fill="#e3f2fd"/><path d="M2 8.5L4 6.5L5.5 8L7.5 6" stroke="#1565c0" stroke-width="1.1" fill="none"/></svg>
<div class="t" style="left:339px;top:933px;font-size:14px;color:#e4e4e4;letter-spacing:-0.68px">Resources</div>
<svg style="left:318px;top:972px" width="16" height="14"><path d="M2 4.5L5 5.5L13 2.5Q15 2 15 3Q14.5 4 12.5 5L9 6.5L6 10.5L5 10.5L6.5 7L3.5 7.5Z" fill="#9fa8da"/><path d="M1 4L2.5 3.8L4.5 5.5L2.5 6Z" fill="#3f51b5"/><rect x="1" y="11.5" width="14" height="1.8" fill="#546e7a"/></svg>
<div class="t" style="left:339px;top:971px;font-size:14px;color:#e4e4e4;letter-spacing:-0.68px">User guides</div>
<svg style="left:320px;top:1012px" width="13" height="11"><rect x="0" y="0" width="12" height="2.8" fill="#03a9f4"/><rect x="0" y="4.6" width="12" height="1.9" fill="#546e7a"/><rect x="0" y="8.6" width="12" height="1.9" fill="#546e7a"/></svg>
<div class="t" style="left:339px;top:1009px;font-size:14px;color:#e4e4e4;letter-spacing:-0.68px">Main menu</div>

<svg style="left:584px;top:826px" width="43" height="41"><rect x="0.7" y="0" width="28" height="27" rx="2.5" fill="#d3d3d3"/><text x="14" y="20.5" font-size="19" fill="#5a5a5a" text-anchor="middle" font-family="Liberation Sans">文</text><rect x="13" y="12.5" width="28" height="28" rx="2.5" fill="#2a9df4"/><text x="27" y="34" font-size="20" font-weight="700" fill="#fff" text-anchor="middle" font-family="Liberation Sans">A</text><path d="M39 0V9L34 4.5Z" fill="#e0245e"/><path d="M0.5 31V40L5.5 35.5Z" fill="#e0245e"/></svg>
<div class="t" style="left:639px;top:829px;font-size:17px;font-weight:700;color:#e8e8e8;letter-spacing:-0.86px">External object translate</div>
<div class="t" style="left:639px;top:852px;font-size:12px;color:#e0e0e0;letter-spacing:-0.6px">Total 2</div>

<div class="a" style="left:1647px;top:827px;width:72px;height:38px;border-radius:4px;background:#3b78c0"></div>
<div class="t" style="left:1660px;top:838px;font-size:16px;color:#fff;letter-spacing:-0.35px">Create</div>
<svg style="left:1738px;top:837px" width="18" height="17"><circle cx="7" cy="7" r="5.3" stroke="#e0e0e0" stroke-width="2.3" fill="none"/><path d="M11 11L16 16" stroke="#e0e0e0" stroke-width="2.8" stroke-linecap="round"/></svg>
<svg style="left:1788px;top:840px" width="14" height="14"><path d="M1.5 1.5L12.5 12.5" stroke="#3a9ae0" stroke-width="3.4"/><path d="M12.5 1L1.5 13" stroke="#f0a020" stroke-width="2.4"/><path d="M11.5 1.5L13 3" stroke="#e77" stroke-width="2.4"/></svg>
<svg style="left:1838px;top:839px" width="15" height="13"><g fill="#e0e0e0"><rect x="0" y="0" width="15" height="2.2"/><rect x="0" y="5" width="15" height="2.2"/><rect x="0" y="10" width="15" height="2.2"/></g></svg>

<!-- table -->
<div class="a" style="left:565px;top:875px;width:1324px;height:135px;border:1px solid #4b4c4a;background:#292b28"></div>
<div class="a" style="left:566px;top:876px;width:1322px;height:57px;background:#1b1d1a"></div>
<div class="a" style="left:566px;top:933px;width:1322px;height:38px;background:#363a37"></div>
<div class="a" style="left:565px;top:1010px;width:1324px;height:16px;background:#1b1d1a"></div>
<div class="a" style="left:660px;top:933px;width:0;height:76px;border-left:1px dotted #4b4c4a"></div>
<div class="a" style="left:927px;top:933px;width:0;height:76px;border-left:1px dotted #4b4c4a"></div>
<div class="a" style="left:1203px;top:933px;width:0;height:76px;border-left:1px dotted #4b4c4a"></div>
<div class="a" style="left:1568px;top:933px;width:0;height:76px;border-left:1px dotted #4b4c4a"></div>
<div class="a" style="left:586px;top:898px;width:13px;height:13px;border-radius:2px;background:#a8d4f8;border:2px solid #3b8ee0"></div>
<svg style="left:605px;top:902px" width="8" height="5"><path d="M0 0H8L4 4.5Z" fill="#e0e0e0"/></svg>
<svg style="left:629px;top:897px" width="17" height="16"><circle cx="6.5" cy="6.5" r="5.2" stroke="#d0d0d0" stroke-width="1.5" fill="none"/><path d="M10.3 10.3L15 15" stroke="#d0d0d0" stroke-width="2" stroke-linecap="round"/></svg>
<div class="t" style="left:670px;top:898px;font-size:14px;font-weight:700;color:#e0e0e0;letter-spacing:-1.0px">Language</div>
<svg style="left:734px;top:897px" width="18" height="14"><path d="M3 0V12M0 9L3 12.5L6 9" stroke="#888" stroke-width="1.4" fill="none"/><g fill="#888"><rect x="8" y="1" width="3" height="1.3"/><rect x="8" y="5" width="5" height="1.3"/><rect x="8" y="9" width="7" height="1.3"/><rect x="8" y="12" width="9" height="1.3"/></g></svg>
<div class="t" style="left:937px;top:898px;font-size:14px;font-weight:700;color:#e0e0e0;letter-spacing:-0.88px">Translation</div>
<svg style="left:1010px;top:897px" width="9" height="14"><path d="M0.5 5.5L4.5 0.5L8.5 5.5Z M0.5 8.5L4.5 13.5L8.5 8.5Z" fill="#aaa"/></svg>
<div class="t" style="left:1213px;top:898px;font-size:14px;font-weight:700;color:#e0e0e0;letter-spacing:-0.85px">Plural translation</div>
<svg style="left:1321px;top:897px" width="9" height="14"><path d="M0.5 5.5L4.5 0.5L8.5 5.5Z M0.5 8.5L4.5 13.5L8.5 8.5Z" fill="#aaa"/></svg>
<div class="t" style="left:1578px;top:898px;font-size:14px;font-weight:700;color:#e0e0e0;letter-spacing:-0.95px">Module Name</div>
<svg style="left:1668px;top:897px" width="9" height="14"><path d="M0.5 5.5L4.5 0.5L8.5 5.5Z M0.5 8.5L4.5 13.5L8.5 8.5Z" fill="#aaa"/></svg>

<div class="a" style="left:584px;top:945px;width:12px;height:12px;border-radius:1px;background:#fff"></div>
<svg style="left:616px;top:943px" width="15" height="14"><g fill="#e8e8e8"><rect x="0" y="0" width="15" height="2.3"/><rect x="0" y="5.5" width="15" height="2.3"/><rect x="0" y="11" width="15" height="2.3"/></g></svg>
<div class="t" style="left:671px;top:944px;font-size:14px;color:#e4e4e4;letter-spacing:-0.84px">English</div>
<div class="t" style="left:937px;top:944px;font-size:14px;color:#e4e4e4;letter-spacing:-1.0px">Test 1 API</div>
<div class="t" style="left:1578px;top:944px;font-size:14px;color:#5aaee8;letter-spacing:-0.6px">Application</div>

<div class="a" style="left:584px;top:983px;width:12px;height:12px;border-radius:1px;background:#fff"></div>
<svg style="left:616px;top:981px" width="15" height="14"><g fill="#e8e8e8"><rect x="0" y="0" width="15" height="2.3"/><rect x="0" y="5.5" width="15" height="2.3"/><rect x="0" y="11" width="15" height="2.3"/></g></svg>
<div class="t" style="left:671px;top:982px;font-size:14px;color:#e4e4e4;letter-spacing:-0.84px">French</div>
<div class="t" style="left:937px;top:982px;font-size:14px;color:#e4e4e4;letter-spacing:-1.0px">API test 1</div>
<div class="t" style="left:1578px;top:982px;font-size:14px;color:#5aaee8;letter-spacing:-0.6px">Application</div>

<div class="t" style="left:585px;top:1055px;font-size:14px;color:#e0e0e0;letter-spacing:-0.6px">Total 2</div>
<div class="a" style="left:1835px;top:1053px;width:7px;height:7px;background:#dcdcdc"></div>
<div class="a" style="left:1844px;top:1053px;width:7px;height:7px;background:#dcdcdc"></div>
<div id="foot" class="a"></div>

<!-- footer -->
<div class="t" style="left:838px;top:1065px;font-size:11px;color:#d8d8d8;letter-spacing:-0.6px">© Simplicité Software</div>
<div class="t" style="left:947px;top:1065px;font-size:11px;color:#d8d8d8;letter-spacing:-0.6px">Legal mentions</div>
<div class="t" style="left:1029px;top:1065px;font-size:11px;color:#d8d8d8;letter-spacing:-0.45px">Accessibility</div>

</body></html>
